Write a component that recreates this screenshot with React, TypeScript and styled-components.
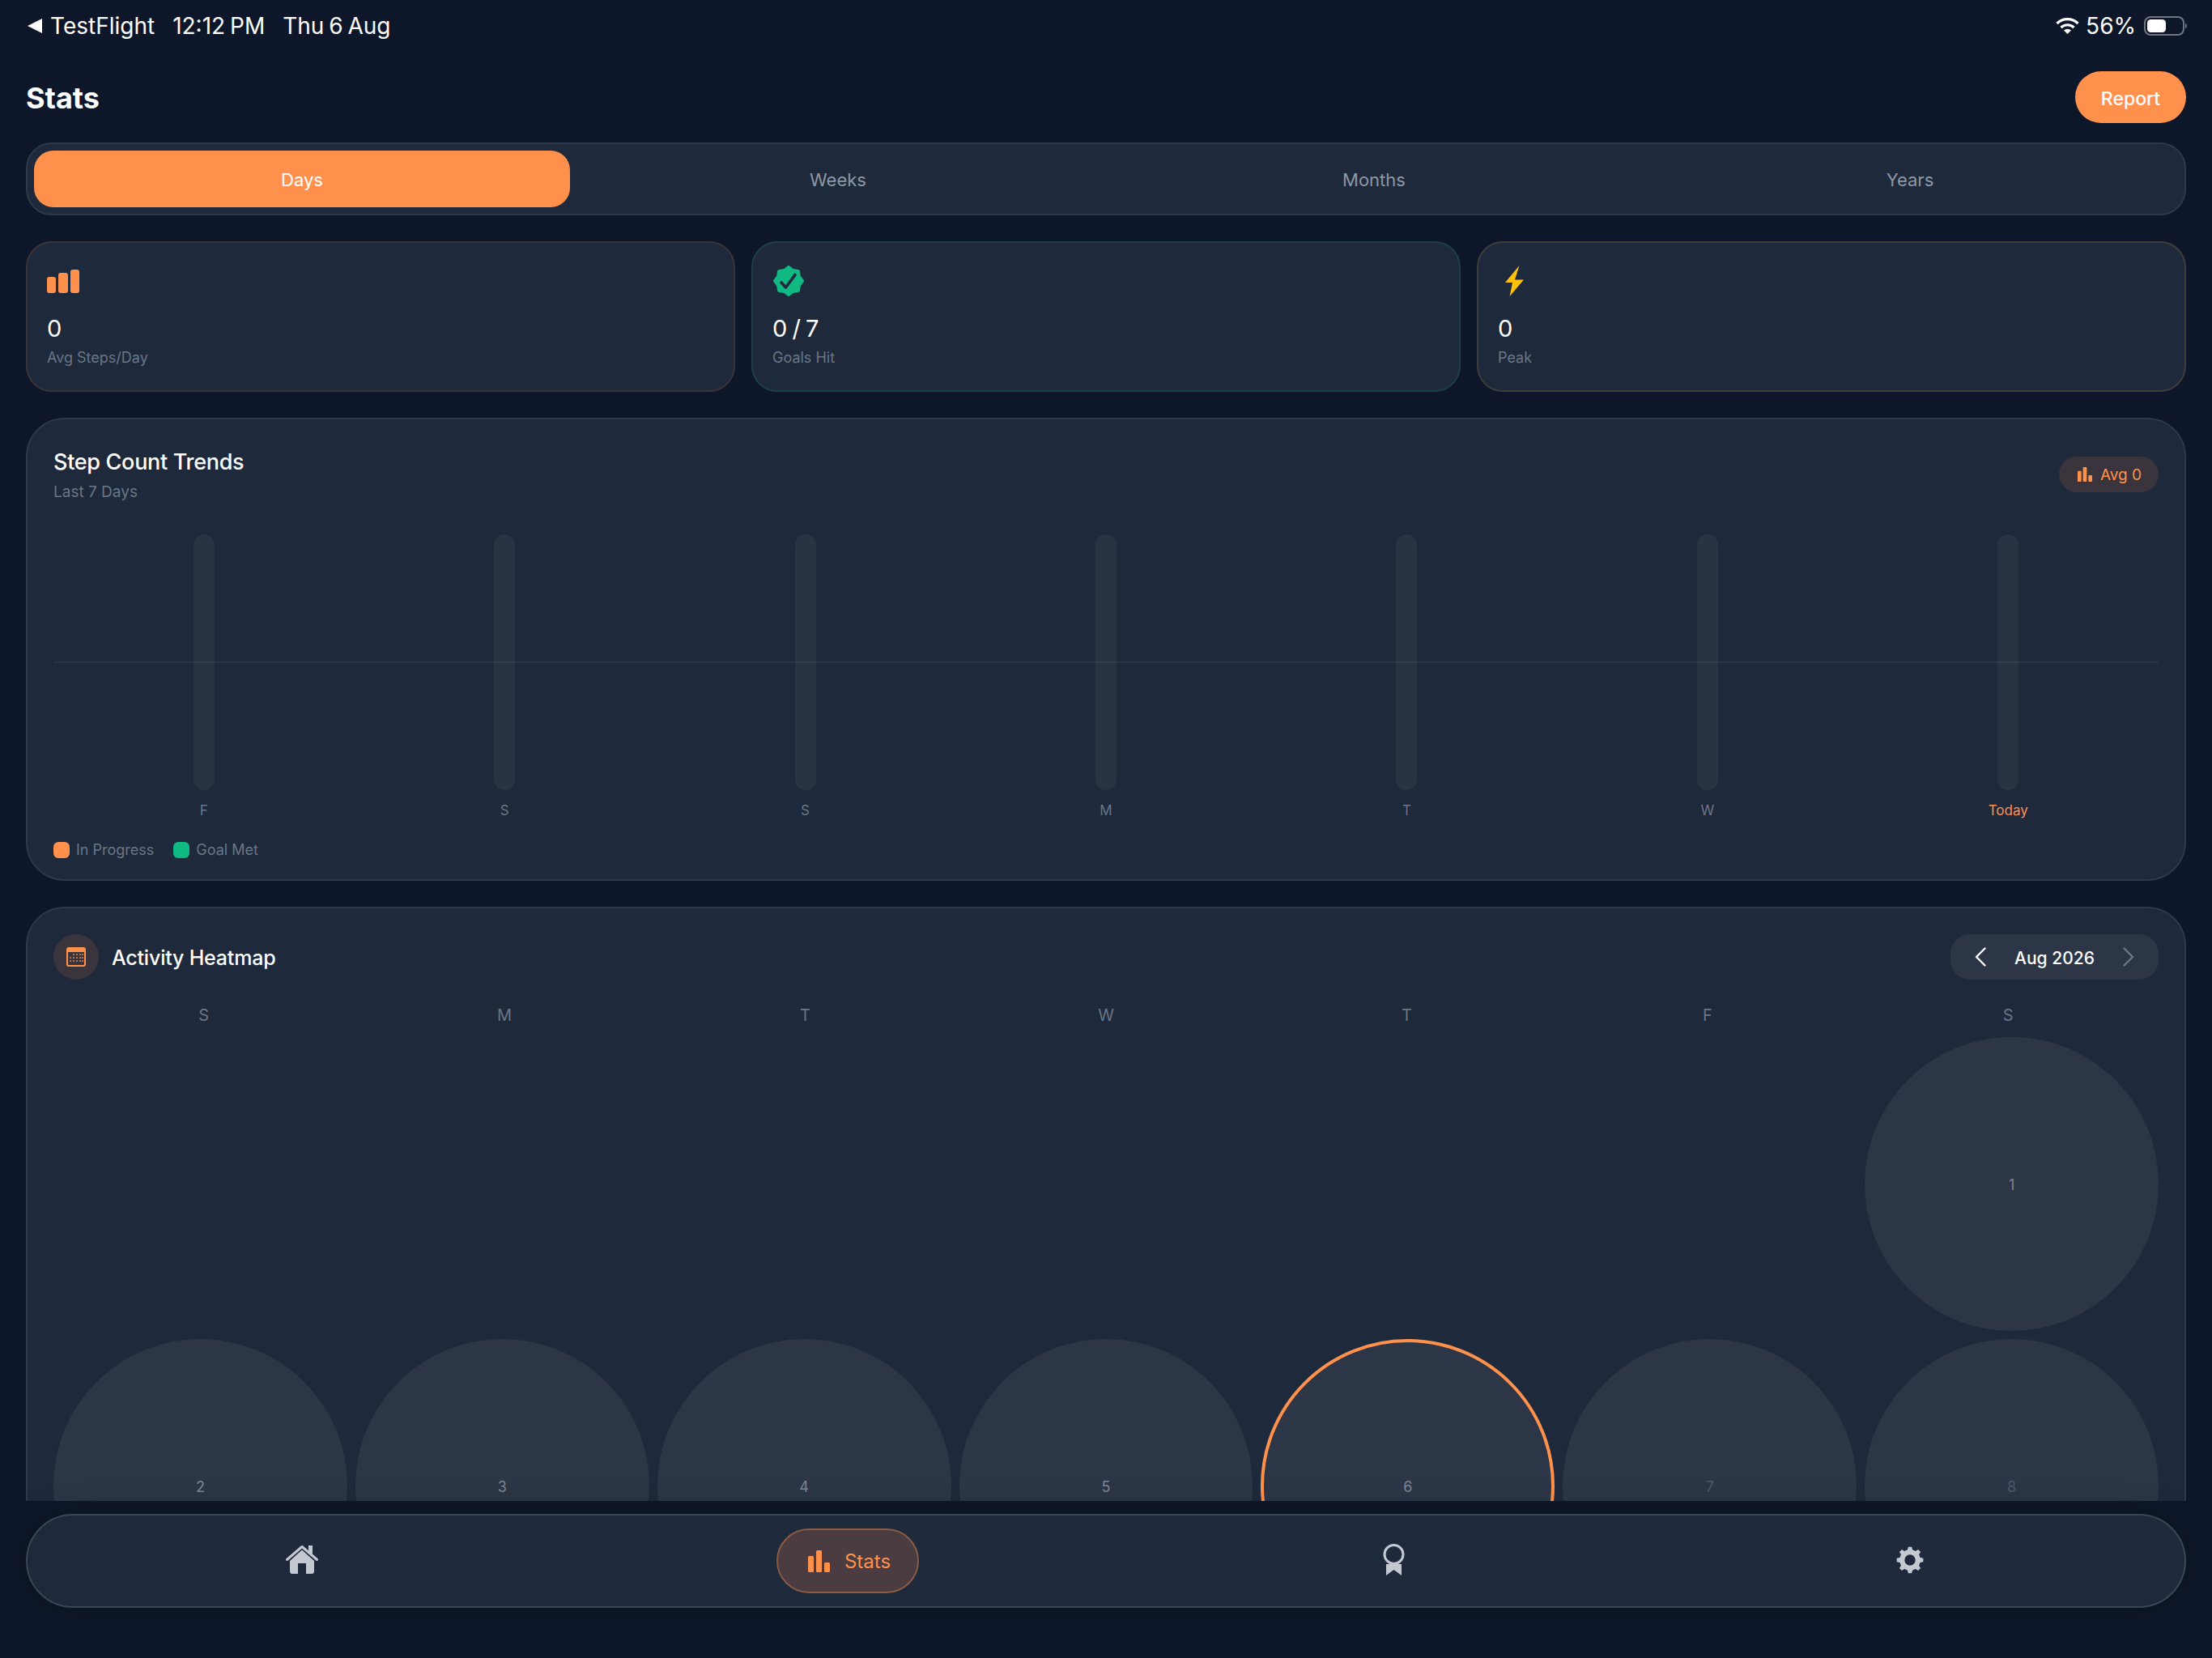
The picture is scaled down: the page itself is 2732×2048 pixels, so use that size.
import React from 'react';
import styled, { createGlobalStyle } from 'styled-components';

const orange = '#ff914d';
const green = '#10b981';
const panel = '#1e293b';
const muted = '#6b7686';

const GlobalStyle = createGlobalStyle`
  html, body {
    margin: 0;
    padding: 0;
    background: #0e172a;
  }
  * {
    box-sizing: border-box;
  }
`;

const gearPath = (cx: number, cy: number, outer: number, root: number, hole: number, teeth: number) => {
  const pts: string[] = [];
  const step = (Math.PI * 2) / teeth;
  for (let i = 0; i < teeth; i++) {
    const a = i * step - Math.PI / 2;
    [
      [-0.3, root],
      [-0.17, outer],
      [0.17, outer],
      [0.3, root],
    ].forEach(([f, r]) => {
      pts.push(`${(cx + Math.cos(a + f * step) * r).toFixed(2)} ${(cy + Math.sin(a + f * step) * r).toFixed(2)}`);
    });
  }
  return `M${pts.join('L')}Z M${cx - hole} ${cy}a${hole} ${hole} 0 1 0 ${hole * 2} 0a${hole} ${hole} 0 1 0 ${-hole * 2} 0Z`;
};

const badgePoints = (cx: number, cy: number, outer: number, inner: number) => {
  const pts: string[] = [];
  for (let i = 0; i < 16; i++) {
    const a = (i * Math.PI) / 8 - Math.PI / 2;
    const r = i % 2 === 0 ? outer : inner;
    pts.push(`${(cx + Math.cos(a) * r).toFixed(2)},${(cy + Math.sin(a) * r).toFixed(2)}`);
  }
  return pts.join(' ');
};

const BarsIcon: React.FC<{ size: number }> = ({ size }) => (
  <svg width={size} height={size} viewBox="0 0 27 27" fill={orange}>
    <rect x="0" y="7" width="7" height="20" rx="1.5" />
    <rect x="10" y="0" width="7" height="27" rx="1.5" />
    <rect x="20" y="15" width="7" height="12" rx="1.5" />
  </svg>
);

const StepsIcon = () => (
  <svg width="40" height="29" viewBox="0 0 40 29" fill={orange}>
    <rect x="0" y="9" width="11" height="20" rx="3" />
    <rect x="14" y="4" width="12" height="25" rx="3" />
    <rect x="29" y="0" width="11" height="29" rx="3" />
  </svg>
);

const GoalIcon = () => (
  <svg width="38" height="38" viewBox="0 0 38 38">
    <polygon points={badgePoints(19, 19, 17.5, 14.5)} fill={green} stroke={green} strokeWidth="3" strokeLinejoin="round" />
    <polyline points="10,21 15.5,27 27,11.5" fill="none" stroke={panel} strokeWidth="3.6" strokeLinecap="round" strokeLinejoin="round" />
  </svg>
);

const BoltIcon = () => (
  <svg width="23" height="38" viewBox="0 0 23 38" fill="#ffc107">
    <polygon points="17.5,0 0,21 9,21 5.6,38 23,17.5 12,17.5" />
  </svg>
);

const CalendarIcon = () => (
  <svg width="24" height="24" viewBox="0 0 24 24" fill={orange}>
    <path d="M3 0h18a3 3 0 0 1 3 3v18a3 3 0 0 1-3 3H3a3 3 0 0 1-3-3V3a3 3 0 0 1 3-3Zm-1 6v15a1 1 0 0 0 1 1h18a1 1 0 0 0 1-1V6Z" />
    {[9, 13, 17].map((y) =>
      [5, 9, 13, 17, 20].map((x) =>
        y === 9 && x < 9 ? null : <rect key={`${x}-${y}`} x={x - 0.75} y={y - 0.75} width="1.6" height="1.6" />,
      ),
    )}
  </svg>
);

const HomeIcon = () => (
  <svg width="66" height="66" viewBox="0 0 66 66" fill="#c3c8d1">
    <path d="M33 19.5 18 33v13a3 3 0 0 0 3 3h7V36h10v13h7a3 3 0 0 0 3-3V33Z" />
    <path d="M14.5 31.5 33 15.5l18.5 16" fill="none" stroke="#c3c8d1" strokeWidth="3" strokeLinecap="round" strokeLinejoin="round" />
    <rect x="41" y="14" width="5" height="10" />
  </svg>
);

const MedalIcon = () => (
  <svg width="66" height="66" viewBox="0 0 66 66" fill="#c3c8d1">
    <circle cx="33.5" cy="25" r="11.5" fill="none" stroke="#c3c8d1" strokeWidth="3" />
    <polygon points="24,37 43,37 43,51 33.5,44 24,51" />
  </svg>
);

const GearIcon = () => (
  <svg width="66" height="66" viewBox="0 0 66 66" fill="#c3c8d1">
    <path d={gearPath(33, 32, 16.5, 13, 6.7, 8)} fillRule="evenodd" />
  </svg>
);

const Page = styled.div`
  width: 2732px;
  height: 2048px;
  overflow: hidden;
  display: flex;
  flex-direction: column;
  background: #0e172a;
  color: #fff;
  font-family: Inter, 'Liberation Sans', sans-serif;
`;

const StatusBar = styled.div`
  flex: none;
  height: 64px;
  padding: 0 30px 0 34px;
  display: flex;
  align-items: center;
  justify-content: space-between;
  font-size: 28px;
  font-weight: 400;
`;

const StatusGroup = styled.div`
  display: flex;
  align-items: center;
`;

const BackLabel = styled.span`
  margin-left: 10px;
`;

const StatusItem = styled.span`
  margin-left: 22px;
  word-spacing: -2px;
`;

const Percent = styled.span`
  margin: 0 10px 0 8px;
`;

const Scroller = styled.div`
  flex: none;
  height: 1790px;
  overflow: hidden;
  padding: 24px 32px 0;
  display: flex;
  flex-direction: column;
  gap: 32px;
`;

const Top = styled.div`
  flex: none;
  display: flex;
  flex-direction: column;
  gap: 24px;
`;

const Header = styled.div`
  height: 64px;
  display: flex;
  align-items: center;
  justify-content: space-between;
`;

const Title = styled.h1`
  margin: 2px 0 0;
  font-size: 36px;
  font-weight: 700;
`;

const ReportButton = styled.button`
  width: 137px;
  height: 64px;
  padding: 4px 0 0;
  border: 0;
  border-radius: 32px;
  background: ${orange};
  color: #fff;
  font: 500 23px Inter, 'Liberation Sans', sans-serif;
`;

const Tabs = styled.div`
  height: 90px;
  padding: 8px;
  display: grid;
  grid-template-columns: repeat(4, 1fr);
  background: ${panel};
  border: 2px solid #2c3a4b;
  border-radius: 32px;
`;

const Tab = styled.div<{ $active?: boolean }>`
  display: flex;
  align-items: center;
  justify-content: center;
  padding-top: 2px;
  border-radius: 24px;
  font-size: 22px;
  font-weight: 400;
  background: ${(p) => (p.$active ? orange : 'transparent')};
  color: ${(p) => (p.$active ? '#fff' : '#8e97a5')};
`;

const Cards = styled.div`
  flex: none;
  display: grid;
  grid-template-columns: repeat(3, 1fr);
  gap: 20px;
`;

const Card = styled.div<{ $edge: string }>`
  height: 186px;
  padding: 27px 24px 0;
  background: ${panel};
  border: 2px solid ${(p) => p.$edge};
  border-radius: 32px;
`;

const CardIcon = styled.div`
  width: 40px;
  height: 40px;
  display: flex;
  align-items: center;
  justify-content: center;
`;

const CardValue = styled.div`
  margin-top: 19px;
  font-size: 29px;
  font-weight: 400;
  letter-spacing: -1px;
  line-height: 40px;
`;

const CardLabel = styled.div`
  margin-top: 2px;
  font-size: 18px;
  line-height: 28px;
  color: ${muted};
`;

const Panel = styled.section`
  flex: none;
  padding: 32px 32px 22px;
  background: ${panel};
  border: 2px solid #2c3a4b;
  border-radius: 48px;
`;

const PanelHead = styled.div`
  display: flex;
  align-items: center;
  justify-content: space-between;
`;

const PanelTitle = styled.div`
  padding-top: 1px;
  height: 40px;
  font-size: 27px;
  font-weight: 500;
  letter-spacing: -0.3px;
  line-height: 40px;
`;

const HeatTitle = styled.div`
  padding-top: 2px;
  font-size: 25px;
  font-weight: 500;
  letter-spacing: -0.2px;
  line-height: 40px;
`;

const PanelSub = styled.div`
  margin-top: 4px;
  font-size: 19px;
  line-height: 28px;
  color: ${muted};
`;

const AvgBadge = styled.div`
  height: 44px;
  width: 123px;
  padding-left: 2px;
  display: flex;
  align-items: center;
  justify-content: center;
  gap: 10px;
  border-radius: 22px;
  background: #3a353c;
  color: ${orange};
  font-size: 19px;
  font-weight: 400;
`;

const Chart = styled.div`
  position: relative;
  margin-top: 38px;
  display: grid;
  grid-template-columns: repeat(7, 1fr);
`;

const GoalLine = styled.div`
  position: absolute;
  left: 0;
  right: 0;
  top: 157px;
  height: 2px;
  background: rgba(255, 255, 255, 0.05);
`;

const Column = styled.div`
  display: flex;
  flex-direction: column;
  align-items: center;
`;

const Track = styled.div`
  width: 26px;
  height: 316px;
  border-radius: 13px;
  background: #283444;
`;

const DayLabel = styled.div<{ $today?: boolean }>`
  margin-top: 13px;
  font-size: 17px;
  line-height: 24px;
  color: ${(p) => (p.$today ? orange : muted)};
`;

const Legend = styled.div`
  margin-top: 23px;
  display: flex;
  align-items: center;
  gap: 24px;
`;

const LegendItem = styled.div`
  display: flex;
  align-items: center;
  gap: 8px;
  font-size: 18px;
  line-height: 28px;
  color: ${muted};
`;

const Swatch = styled.span<{ $color: string }>`
  width: 20px;
  height: 20px;
  border-radius: 6px;
  background: ${(p) => p.$color};
`;

const HeatTitleRow = styled.div`
  display: flex;
  align-items: center;
  gap: 16px;
`;

const IconCircle = styled.div`
  width: 56px;
  height: 56px;
  border-radius: 50%;
  background: #3a353c;
  display: flex;
  align-items: center;
  justify-content: center;
`;

const Pager = styled.div`
  width: 257px;
  height: 56px;
  padding: 0 30px;
  display: flex;
  align-items: center;
  justify-content: space-between;
  border-radius: 24px;
  background: #2c3646;
  font-size: 21px;
  font-weight: 500;
`;

const PagerLabel = styled.span`
  padding-top: 2px;
`;

const Weekdays = styled.div`
  margin-top: 30px;
  display: grid;
  grid-template-columns: repeat(7, 1fr);
`;

const Weekday = styled.div`
  text-align: center;
  font-size: 20px;
  line-height: 28px;
  color: ${muted};
`;

const DayGrid = styled.div`
  margin-top: 13px;
  display: grid;
  grid-template-columns: repeat(7, 1fr);
  gap: 10px;
`;

const DayCell = styled.div<{ $today?: boolean; $future?: boolean }>`
  aspect-ratio: 1;
  padding-top: 2px;
  border-radius: 50%;
  display: flex;
  align-items: center;
  justify-content: center;
  background: #2c3646;
  border: ${(p) => (p.$today ? `4px solid ${orange}` : '0')};
  font-size: 18px;
  color: ${(p) => (p.$future ? '#4d5868' : '#7c8695')};
`;

const Nav = styled.nav`
  flex: none;
  width: 2668px;
  height: 116px;
  margin: 16px 0 0 32px;
  padding: 0 20px;
  display: flex;
  align-items: center;
  justify-content: space-around;
  background: ${panel};
  border: 2px solid #3a4656;
  border-radius: 58px;
  box-shadow: 0 0 40px rgba(0, 0, 0, 0.22);
`;

const NavItem = styled.div`
  width: 104px;
  height: 80px;
  display: flex;
  align-items: center;
  justify-content: center;
`;

const NavActive = styled.div`
  width: 176px;
  height: 80px;
  padding-left: 4px;
  display: flex;
  align-items: center;
  justify-content: center;
  gap: 18px;
  border: 2px solid #8a5b43;
  border-radius: 40px;
  background: #4a3c41;
  color: ${orange};
  font-size: 24px;
  font-weight: 400;
`;

const weekTrend = ['F', 'S', 'S', 'M', 'T', 'W', 'Today'];
const weekHead = ['S', 'M', 'T', 'W', 'T', 'F', 'S'];
const leadingBlanks = 6;
const shownDays = [1, 2, 3, 4, 5, 6, 7, 8];
const today = 6;

const App: React.FC = () => (
  <>
    <GlobalStyle />
    <Page>
      <StatusBar>
        <StatusGroup>
          <svg width="18" height="18" viewBox="0 0 18 18" fill="#fff">
            <polygon points="18,0 18,18 0,9" />
          </svg>
          <BackLabel>TestFlight</BackLabel>
          <StatusItem>12:12 PM</StatusItem>
          <StatusItem>Thu 6 Aug</StatusItem>
        </StatusGroup>
        <StatusGroup>
          <svg width="29" height="20" viewBox="0 0 29 20" fill="none" stroke="#fff" strokeWidth="3.2">
            <path d="M1.5 7a18.5 18.5 0 0 1 26 0" />
            <path d="M6.5 12a11.5 11.5 0 0 1 16 0" />
            <path d="M14.5 20 10 15.5a6.4 6.4 0 0 1 9 0Z" fill="#fff" stroke="none" />
          </svg>
          <Percent>56%</Percent>
          <svg width="54" height="24" viewBox="0 0 54 24">
            <rect x="1" y="1" width="48" height="22" rx="7" fill="none" stroke="#6f7683" strokeWidth="2" />
            <rect x="4" y="4" width="23" height="16" rx="4.5" fill="#fff" />
            <path d="M51 8.5a4 4 0 0 1 0 7Z" fill="#6f7683" />
          </svg>
        </StatusGroup>
      </StatusBar>
      <Scroller>
        <Top>
          <Header>
            <Title>Stats</Title>
            <ReportButton>Report</ReportButton>
          </Header>
          <Tabs>
            <Tab $active>Days</Tab>
            <Tab>Weeks</Tab>
            <Tab>Months</Tab>
            <Tab>Years</Tab>
          </Tabs>
        </Top>
        <Cards>
          <Card $edge="#3a3439">
            <CardIcon>
              <StepsIcon />
            </CardIcon>
            <CardValue>0</CardValue>
            <CardLabel>Avg Steps/Day</CardLabel>
          </Card>
          <Card $edge="#1d3f48">
            <CardIcon>
              <GoalIcon />
            </CardIcon>
            <CardValue>0 / 7</CardValue>
            <CardLabel>Goals Hit</CardLabel>
          </Card>
          <Card $edge="#3f3d3a">
            <CardIcon>
              <BoltIcon />
            </CardIcon>
            <CardValue>0</CardValue>
            <CardLabel>Peak</CardLabel>
          </Card>
        </Cards>
        <Panel>
          <PanelHead>
            <div>
              <PanelTitle>Step Count Trends</PanelTitle>
              <PanelSub>Last 7 Days</PanelSub>
            </div>
            <AvgBadge>
              <BarsIcon size={18} />
              Avg 0
            </AvgBadge>
          </PanelHead>
          <Chart>
            <GoalLine />
            {weekTrend.map((day, i) => (
              <Column key={i}>
                <Track />
                <DayLabel $today={day === 'Today'}>{day}</DayLabel>
              </Column>
            ))}
          </Chart>
          <Legend>
            <LegendItem>
              <Swatch $color={orange} />
              In Progress
            </LegendItem>
            <LegendItem>
              <Swatch $color={green} />
              Goal Met
            </LegendItem>
          </Legend>
        </Panel>
        <Panel>
          <PanelHead>
            <HeatTitleRow>
              <IconCircle>
                <CalendarIcon />
              </IconCircle>
              <HeatTitle>Activity Heatmap</HeatTitle>
            </HeatTitleRow>
            <Pager>
              <svg width="14" height="24" viewBox="0 0 14 24" fill="none" stroke="#fff" strokeWidth="2.4" strokeLinecap="round" strokeLinejoin="round">
                <path d="M12.5 1.5 2 12l10.5 10.5" />
              </svg>
              <PagerLabel>Aug 2026</PagerLabel>
              <svg width="14" height="24" viewBox="0 0 14 24" fill="none" stroke="#6b7686" strokeWidth="2.4" strokeLinecap="round" strokeLinejoin="round">
                <path d="M1.5 1.5 12 12 1.5 22.5" />
              </svg>
            </Pager>
          </PanelHead>
          <Weekdays>
            {weekHead.map((day, i) => (
              <Weekday key={i}>{day}</Weekday>
            ))}
          </Weekdays>
          <DayGrid>
            {Array.from({ length: leadingBlanks }).map((_, i) => (
              <div key={i} />
            ))}
            {shownDays.map((day) => (
              <DayCell key={day} $today={day === today} $future={day > today}>
                {day}
              </DayCell>
            ))}
          </DayGrid>
        </Panel>
      </Scroller>
      <Nav>
        <NavItem>
          <HomeIcon />
        </NavItem>
        <NavActive>
          <BarsIcon size={27} />
          Stats
        </NavActive>
        <NavItem>
          <MedalIcon />
        </NavItem>
        <NavItem>
          <GearIcon />
        </NavItem>
      </Nav>
    </Page>
  </>
);

export default App;
